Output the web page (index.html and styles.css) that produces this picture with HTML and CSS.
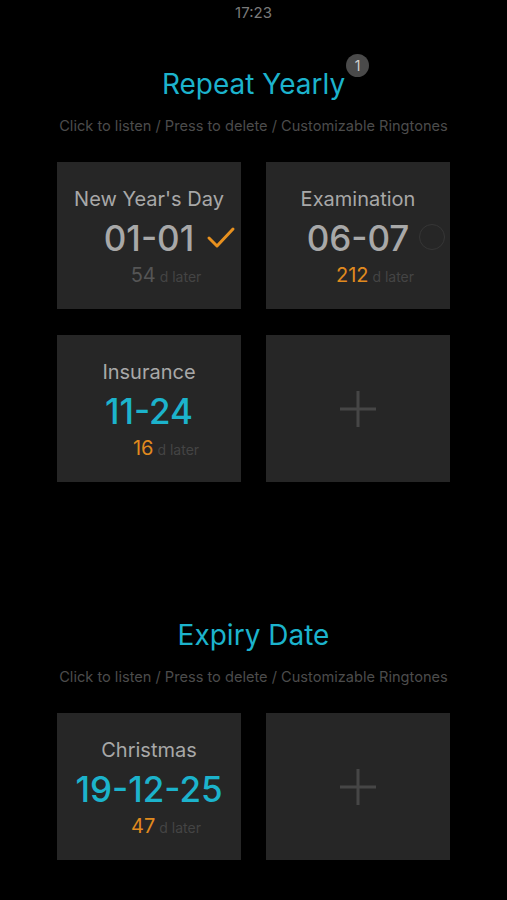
FILE: index.html
```html
<!DOCTYPE html>
<html>
<head>
  <title>Countdown</title>
  <link rel="stylesheet" href="styles.css">
</head>
<body>
  <div class="status">17:23</div>

  <section class="group first">
    <h2><span class="head">Repeat Yearly<span class="badge">1</span></span></h2>
    <p class="hint">Click to listen / Press to delete / Customizable Ringtones</p>
    <div class="grid">
      <div class="card">
        <div class="name">New Year's Day</div>
        <div class="date gray">01-01
          <svg class="mark" width="30" height="24" viewBox="0 0 30 24"><path d="M3 12 L11 20 L27 3" fill="none" stroke="#e8911f" stroke-width="3" stroke-linecap="round" stroke-linejoin="round"/></svg>
        </div>
        <div class="left"><span class="num dim">54</span> d later</div>
      </div>
      <div class="card">
        <div class="name">Examination</div>
        <div class="date gray">06-07<span class="ring"></span></div>
        <div class="left"><span class="num orange">212</span> d later</div>
      </div>
      <div class="card">
        <div class="name">Insurance</div>
        <div class="date cyan">11-24</div>
        <div class="left"><span class="num orange">16</span> d later</div>
      </div>
      <div class="card add">
        <svg width="38" height="38" viewBox="0 0 38 38"><path d="M19 1 V37 M1 19 H37" stroke="#464646" stroke-width="3"/></svg>
      </div>
    </div>
  </section>

  <section class="group second">
    <h2><span class="head">Expiry Date</span></h2>
    <p class="hint">Click to listen / Press to delete / Customizable Ringtones</p>
    <div class="grid">
      <div class="card">
        <div class="name">Christmas</div>
        <div class="date cyan">19-12-25</div>
        <div class="left"><span class="num orange">47</span> d later</div>
      </div>
      <div class="card add">
        <svg width="38" height="38" viewBox="0 0 38 38"><path d="M19 1 V37 M1 19 H37" stroke="#464646" stroke-width="3"/></svg>
      </div>
    </div>
  </section>
</body>
</html>
```

FILE: styles.css
```css
body {
  margin: 0;
  background: #000;
  font-family: Inter, Roboto, "Liberation Sans", sans-serif;
  color: #a8a8a8;
}
.status {
  height: 26px;
  line-height: 26px;
  text-align: center;
  font-size: 15px;
  color: #7a7a7a;
}
.group.first {
  padding-top: 38px;
}
.group.second {
  padding-top: 133px;
}
h2 {
  margin: 0;
  height: 40px;
  line-height: 40px;
  text-align: center;
  font-size: 28px;
  font-weight: 400;
  color: #1cb3cc;
}
.head {
  position: relative;
}
.badge {
  position: absolute;
  right: -24px;
  top: -13px;
  width: 23px;
  height: 23px;
  border-radius: 50%;
  background: #4a4a4a;
  color: #d0d0d0;
  font-size: 14px;
  line-height: 23px;
  text-align: center;
}
.hint {
  margin: 12px 0 0;
  line-height: 20px;
  text-align: center;
  font-size: 14.6px;
  color: #4c4c4c;
}
.grid {
  margin-top: 26px;
  display: grid;
  grid-template-columns: 184px 184px;
  grid-auto-rows: 147px;
  gap: 26px 25px;
  justify-content: center;
}
.card {
  background: #262626;
  display: flex;
  flex-direction: column;
  align-items: center;
  padding-top: 25px;
  box-sizing: border-box;
}
.card.add {
  justify-content: center;
  padding-top: 0;
}
.name {
  font-size: 20px;
  line-height: 24px;
  color: #a8a8a8;
}
.date {
  position: relative;
  margin-top: 6px;
  font-size: 35px;
  line-height: 42px;
  font-weight: 500;
}
.gray {
  color: #a8a8a8;
}
.cyan {
  color: #1cb3cc;
}
.mark {
  position: absolute;
  left: 100%;
  top: 9px;
  margin-left: 12px;
}
.ring {
  position: absolute;
  left: 100%;
  top: 7px;
  margin-left: 10px;
  width: 24px;
  height: 24px;
  border: 1.5px solid #363636;
  border-radius: 50%;
}
.left {
  margin-top: 4px;
  padding-left: 34px;
  font-size: 14px;
  line-height: 24px;
  color: #444;
}
.num {
  font-size: 20px;
}
.num.dim {
  color: #555;
}
.orange {
  color: #e08a1e;
}
```
